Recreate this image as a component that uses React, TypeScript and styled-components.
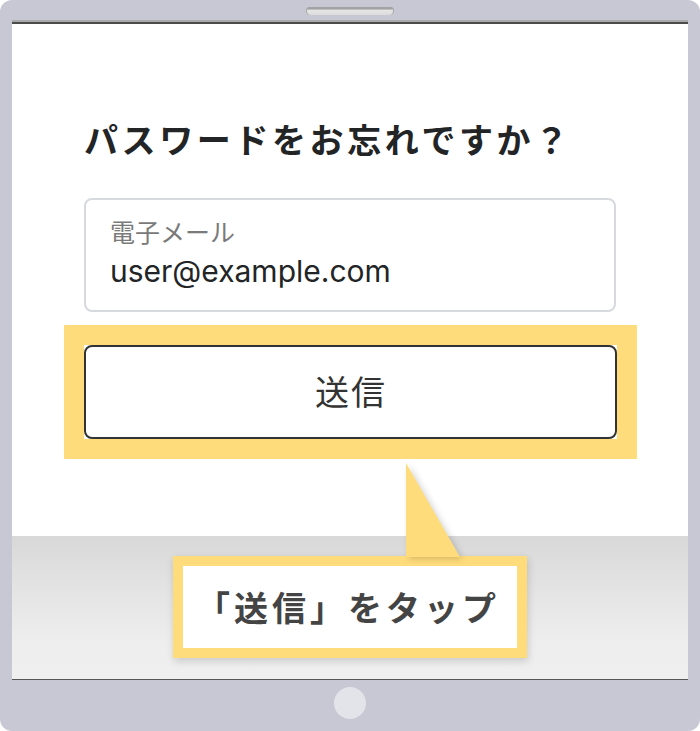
import React from "react";
import styled, { createGlobalStyle } from "styled-components";

const Global = createGlobalStyle`
  html, body { margin: 0; padding: 0; background: #ffffff; }
  body { font-family: "Noto Sans CJK JP", "Noto Sans", sans-serif; }
  * { box-sizing: border-box; }
`;

const JP = `"Noto Sans CJK JP", "Noto Sans", sans-serif`;
const YELLOW = "#ffdc7b";

const Device = styled.div`
  width: 700px;
  height: 731px;
  background: #c8c8d4;
  border-radius: 12px;
  display: flex;
  flex-direction: column;
  align-items: center;
  overflow: hidden;
`;

const TopBar = styled.div`
  width: 100%;
  height: 20px;
  display: flex;
  justify-content: center;
  padding-top: 7px;
`;

const Speaker = styled.div`
  width: 88px;
  height: 8px;
  border-radius: 4px;
  background: linear-gradient(#a2a2a2 0, #a2a2a2 25%, #e6e6e6 40%, #dcdcdc 100%);
  box-shadow: inset 1px 0 0 #a8a8a8, inset -1px 0 0 #a8a8a8;
`;

const Screen = styled.div`
  position: relative;
  width: 676px;
  height: 658px;
  margin-top: 2px;
  border-top: 2px solid #4b4b4b;
  border-bottom: 1px solid #555555;
  box-shadow: 0 -2px 0 #a9a9a9;
  background: #ffffff;
  display: flex;
  flex-direction: column;
`;

const Page = styled.div`
  height: 512px;
  padding-top: 94px;
  display: flex;
  flex-direction: column;
  align-items: center;
`;

const Column = styled.div`
  width: 532px;
  display: flex;
  flex-direction: column;
`;

const Title = styled.h1`
  margin: 0;
  font-family: ${JP};
  font-size: 34px;
  line-height: 42px;
  font-weight: 700;
  letter-spacing: 3.6px;
  color: #222426;
  white-space: nowrap;
`;

const Field = styled.div`
  margin-top: 38px;
  height: 114px;
  border: 2px solid #d6d9dd;
  border-radius: 8px;
  padding: 16px 24px 0;
  display: flex;
  flex-direction: column;
`;

const FieldLabel = styled.div`
  font-family: ${JP};
  font-size: 25px;
  line-height: 31px;
  color: #7a7a7a;
`;

const FieldValue = styled.div`
  margin-top: 6px;
  font-family: Inter, "Liberation Sans", sans-serif;
  font-size: 30px;
  line-height: 36px;
  color: #222426;
`;

const Highlight = styled.div`
  margin-top: 13px;
  width: 573px;
  border: 20px solid ${YELLOW};
  background: #ffffff;
`;

const SubmitButton = styled.button`
  display: flex;
  align-items: center;
  justify-content: center;
  width: 100%;
  height: 94px;
  border: 2px solid #333333;
  border-radius: 8px;
  background: #ffffff;
  font-family: ${JP};
  font-size: 34px;
  font-weight: 400;
  letter-spacing: 2px;
  color: #333333;
  padding: 0 0 3px 2px;
`;

const Floor = styled.div`
  flex: 1;
  background: linear-gradient(#d8d8d8 0%, #e6e6e6 45%, #eeeeee 75%, #efefef 100%);
`;

const Callout = styled.div`
  position: absolute;
  left: 161px;
  top: 532px;
  width: 354px;
  height: 102px;
  border: 10px solid ${YELLOW};
  background: #ffffff;
  box-shadow: 1px 3px 8px rgba(0, 0, 0, 0.16);
  display: flex;
  align-items: center;
  justify-content: center;
`;

const CalloutText = styled.span`
  font-family: ${JP};
  font-size: 34px;
  line-height: 40px;
  font-weight: 700;
  letter-spacing: 4px;
  color: #444444;
  white-space: nowrap;
  margin-right: 4px;
`;

const Tail = styled.svg`
  position: absolute;
  left: 223px;
  top: -103px;
  width: 54px;
  height: 94px;
  overflow: visible;
  filter: drop-shadow(3px 2px 3px rgba(0, 0, 0, 0.16));
`;

const BottomBar = styled.div`
  flex: 1;
  width: 100%;
  display: flex;
  justify-content: center;
  padding-top: 7px;
`;

const HomeButton = styled.div`
  width: 32px;
  height: 32px;
  border-radius: 50%;
  background: #e3e3ea;
`;

export default function App() {
  return (
    <>
      <Global />
      <Device>
        <TopBar>
          <Speaker />
        </TopBar>
        <Screen>
          <Page>
            <Column>
              <Title>パスワードをお忘れですか？</Title>
              <Field>
                <FieldLabel>電子メール</FieldLabel>
                <FieldValue>user@example.com</FieldValue>
              </Field>
            </Column>
            <Highlight>
              <SubmitButton type="button">送信</SubmitButton>
            </Highlight>
          </Page>
          <Floor />
          <Callout>
            <Tail viewBox="0 0 54 94">
              <polygon points="0,0 54,94 0,94" fill={YELLOW} />
            </Tail>
            <CalloutText>「送信」をタップ</CalloutText>
          </Callout>
        </Screen>
        <BottomBar>
          <HomeButton />
        </BottomBar>
      </Device>
    </>
  );
}
